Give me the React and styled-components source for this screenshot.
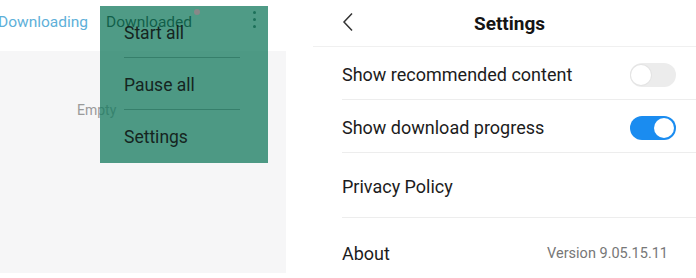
import React from 'react';
import styled, { createGlobalStyle } from 'styled-components';

const Global = createGlobalStyle`
  html, body {
    margin: 0;
    padding: 0;
    background: #fff;
  }
  body {
    font-family: Roboto, "Noto Sans", sans-serif;
    -webkit-font-smoothing: antialiased;
  }
`;

const Page = styled.div`
  display: flex;
  width: 696px;
  height: 278px;
  overflow: hidden;
  background: #fff;
`;

const Left = styled.div`
  position: relative;
  width: 286px;
  display: flex;
  flex-direction: column;
  flex-shrink: 0;
`;

const Tabs = styled.div`
  height: 51px;
  flex-shrink: 0;
  display: flex;
  align-items: center;
  gap: 18px;
  margin-left: -2px;
  padding-bottom: 8px;
  box-sizing: border-box;
  font-size: 15.5px;
`;

const Tab = styled.div`
  color: ${p => (p.active ? '#000' : '#5eb0d9')};
`;

const Empty = styled.div`
  height: 222px;
  flex-shrink: 0;
  background: #f6f6f7;
  color: #9a9a9a;
  font-size: 14px;
  padding: 51px 0 0 77px;
  box-sizing: border-box;
`;

const Menu = styled.div`
  position: absolute;
  left: 100px;
  top: 6px;
  width: 168px;
  height: 157px;
  background: rgba(24, 124, 96, 0.76);
  display: flex;
  flex-direction: column;
`;

const MenuItem = styled.div`
  height: 52px;
  flex-shrink: 0;
  display: flex;
  align-items: center;
  margin: 0 28px 0 24px;
  font-size: 17.5px;
  color: #15251f;
  border-bottom: ${p => (p.last ? 'none' : '1px solid rgba(40, 110, 90, 0.6)')};
  box-sizing: border-box;
  padding-top: 2px;
`;

const Badge = styled.span`
  position: absolute;
  left: 194px;
  top: 9px;
  width: 6px;
  height: 6px;
  border-radius: 50%;
  background: #888;
`;

const Kebab = styled.span`
  position: absolute;
  left: 253px;
  top: 11px;
  display: flex;
  flex-direction: column;
  gap: 4px;
  & > i {
    width: 3px;
    height: 3px;
    border-radius: 50%;
    background: #2a4d43;
  }
`;

const Right = styled.div`
  flex: 1;
  margin-left: 27px;
  display: flex;
  flex-direction: column;
`;

const Header = styled.div`
  height: 47px;
  flex-shrink: 0;
  display: flex;
  align-items: center;
  justify-content: center;
  position: relative;
  border-bottom: 1px solid #f0f0f0;
  box-sizing: border-box;
`;

const Back = styled.svg`
  position: absolute;
  left: 29px;
  top: 12px;
`;

const Title = styled.div`
  font-size: 19px;
  font-weight: 700;
  color: #151515;
  margin-left: 10px;
`;

const Row = styled.div`
  height: ${p => p.h}px;
  flex-shrink: 0;
  margin-left: 29px;
  padding-right: ${p => p.pr || 20}px;
  display: flex;
  align-items: center;
  justify-content: space-between;
  border-bottom: ${p => (p.last ? 'none' : '1px solid #ededed')};
  box-sizing: border-box;
  padding-top: 3px;
`;

const Label = styled.div`
  font-size: 18px;
  color: #1c1c1c;
`;

const Value = styled.div`
  font-size: 14.5px;
  color: #777;
`;

const Toggle = styled.div`
  width: 46px;
  height: 24px;
  border-radius: 12px;
  background: ${p => (p.on ? '#1a8cf0' : '#ececec')};
  position: relative;
  box-sizing: border-box;
  &::after {
    content: '';
    position: absolute;
    top: 2px;
    left: ${p => (p.on ? '24px' : '1px')};
    width: 20px;
    height: 20px;
    border-radius: 50%;
    background: #fff;
    box-shadow: ${p => (p.on ? 'none' : '0 0 0 1px #e4e4e4')};
  }
`;

export default function App() {
  return (
    <Page>
      <Global />
      <Left>
        <Tabs>
          <Tab>Downloading</Tab>
          <Tab active>Downloaded</Tab>
        </Tabs>
        <Empty>Empty</Empty>
        <Kebab><i /><i /><i /></Kebab>
        <Menu>
          <MenuItem>Start all</MenuItem>
          <MenuItem>Pause all</MenuItem>
          <MenuItem last>Settings</MenuItem>
        </Menu>
        <Badge />
      </Left>
      <Right>
        <Header>
          <Back width="12" height="20" viewBox="0 0 12 20">
            <path d="M10 1.5 L2 10 L10 18.5" fill="none" stroke="#333" strokeWidth="1.5" />
          </Back>
          <Title>Settings</Title>
        </Header>
        <Row h={53}>
          <Label>Show recommended content</Label>
          <Toggle />
        </Row>
        <Row h={53}>
          <Label>Show download progress</Label>
          <Toggle on />
        </Row>
        <Row h={65}>
          <Label>Privacy Policy</Label>
        </Row>
        <Row h={68} pr={28} last>
          <Label>About</Label>
          <Value>Version 9.05.15.11</Value>
        </Row>
      </Right>
    </Page>
  );
}
